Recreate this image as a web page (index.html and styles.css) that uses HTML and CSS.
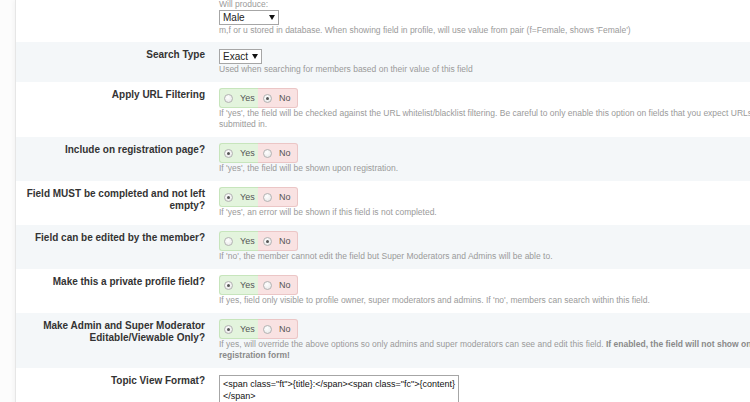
FILE: index.html
```html
<!DOCTYPE html>
<html lang="en">
<head>
    <meta charset="UTF-8">
    <title>Profile Field Options</title>
    <link rel="stylesheet" href="styles.css">
</head>
<body>
    <div class="page">
        <div class="panel">
            <div class="row first">
                <div class="label"></div>
                <div class="value">
                    <div class="hint">Will produce:</div>
                    <div class="select select-male">Male<span class="arrow"></span></div>
                    <div class="desc">m,f or u stored in database. When showing field in profile, will use value from pair (f=Female, shows 'Female')</div>
                </div>
            </div>

            <div class="row alt">
                <div class="label">Search Type</div>
                <div class="value">
                    <div class="select select-exact">Exact<span class="arrow"></span></div>
                    <div class="desc">Used when searching for members based on their value of this field</div>
                </div>
            </div>

            <div class="row">
                <div class="label">Apply URL Filtering</div>
                <div class="value">
                    <div class="toggle">
                        <span class="yes"><span class="radio"></span>Yes</span>
                        <span class="no"><span class="radio checked"></span>No</span>
                    </div>
                    <div class="desc">If 'yes', the field will be checked against the URL whitelist/blacklist filtering. Be careful to only enable this option on fields that you expect URLs submitted in.</div>
                </div>
            </div>

            <div class="row alt">
                <div class="label">Include on registration page?</div>
                <div class="value">
                    <div class="toggle">
                        <span class="yes"><span class="radio checked"></span>Yes</span>
                        <span class="no"><span class="radio"></span>No</span>
                    </div>
                    <div class="desc">If 'yes', the field will be shown upon registration.</div>
                </div>
            </div>

            <div class="row">
                <div class="label">Field MUST be completed and not left empty?</div>
                <div class="value">
                    <div class="toggle">
                        <span class="yes"><span class="radio checked"></span>Yes</span>
                        <span class="no"><span class="radio"></span>No</span>
                    </div>
                    <div class="desc">If 'yes', an error will be shown if this field is not completed.</div>
                </div>
            </div>

            <div class="row alt">
                <div class="label">Field can be edited by the member?</div>
                <div class="value">
                    <div class="toggle">
                        <span class="yes"><span class="radio"></span>Yes</span>
                        <span class="no"><span class="radio checked"></span>No</span>
                    </div>
                    <div class="desc">If 'no', the member cannot edit the field but Super Moderators and Admins will be able to.</div>
                </div>
            </div>

            <div class="row">
                <div class="label">Make this a private profile field?</div>
                <div class="value">
                    <div class="toggle">
                        <span class="yes"><span class="radio checked"></span>Yes</span>
                        <span class="no"><span class="radio"></span>No</span>
                    </div>
                    <div class="desc">If yes, field only visible to profile owner, super moderators and admins. If 'no', members can search within this field.</div>
                </div>
            </div>

            <div class="row alt">
                <div class="label">Make Admin and Super Moderator Editable/Viewable Only?</div>
                <div class="value">
                    <div class="toggle">
                        <span class="yes"><span class="radio checked"></span>Yes</span>
                        <span class="no"><span class="radio"></span>No</span>
                    </div>
                    <div class="desc">If yes, will override the above options so only admins and super moderators can see and edit this field. <b>If enabled, the field will not show on the registration form!</b></div>
                </div>
            </div>

            <div class="row">
                <div class="label">Topic View Format?</div>
                <div class="value">
                    <textarea class="format" readonly>&lt;span class="ft"&gt;{title}:&lt;/span&gt;&lt;span class="fc"&gt;{content}&lt;/span&gt;</textarea>
                </div>
            </div>
        </div>
    </div>
</body>
</html>
```

FILE: styles.css
```css
body {
    margin: 0;
    background-color: #fcfcfc;
    font-family: 'Liberation Sans', Arial, sans-serif;
    color: #333;
    overflow: hidden;
}

.page {
    padding-left: 15px;
}

.panel {
    width: 800px;
    background-color: #ffffff;
    border-left: 1px solid #e6e6e6;
    box-shadow: -2px 0 4px rgba(0, 0, 0, 0.03);
}

.row {
    display: flex;
}

.row.alt {
    background-color: #f4f7f9;
}

.label {
    width: 203px;
    flex-shrink: 0;
    box-sizing: border-box;
    padding: 7px 14px 0 6px;
    text-align: right;
    font-size: 10px;
    line-height: 12px;
    font-weight: bold;
    color: #333;
}

.value {
    width: 558px;
    padding: 6px 0 7px;
}

.row.first .value {
    padding-top: 0;
    padding-bottom: 6px;
}

.hint {
    font-size: 8.5px;
    line-height: 11px;
    margin-top: -1px;
    color: #9a9a9a;
}

.desc {
    font-size: 8.5px;
    line-height: 11px;
    color: #9a9a9a;
}

.desc b {
    color: #8a8a8a;
}

/* Selects */
.select {
    position: relative;
    box-sizing: border-box;
    height: 15px;
    padding: 0 3px;
    border: 1px solid #a6a6a6;
    background-color: #fff;
    font-size: 10px;
    line-height: 13px;
    color: #222;
}

.select-male {
    width: 60px;
}

.select-exact {
    width: 43px;
    margin-top: 1px;
}

.select .arrow {
    position: absolute;
    right: 3px;
    top: 4px;
    width: 0;
    height: 0;
    border-left: 3px solid transparent;
    border-right: 3px solid transparent;
    border-top: 5px solid #111;
}

/* Yes / No toggles */
.toggle {
    display: flex;
    height: 20px;
    font-size: 9px;
    color: #555;
}

.toggle .yes,
.toggle .no {
    display: flex;
    align-items: center;
    gap: 7px;
    box-sizing: border-box;
}

.toggle .yes {
    width: 39px;
    padding-left: 4px;
    background-color: #e3f4dd;
    border: 1px solid #c7e5bc;
    border-right: none;
    border-radius: 3px 0 0 3px;
}

.toggle .no {
    width: 40px;
    padding-left: 5px;
    background-color: #f9e2e2;
    border: 1px solid #ebc6c6;
    border-left: none;
    border-radius: 0 3px 3px 0;
}

.radio {
    position: relative;
    width: 9px;
    height: 9px;
    box-sizing: border-box;
    border: 1px solid #b3b3b3;
    border-radius: 50%;
    background: radial-gradient(circle at 40% 35%, #ffffff, #e4e4e4);
}

.radio.checked::after {
    content: '';
    position: absolute;
    left: 2px;
    top: 2px;
    width: 3px;
    height: 3px;
    border-radius: 50%;
    background-color: #555;
}

.format {
    display: block;
    width: 240px;
    height: 40px;
    margin: 1px 0 0;
    padding: 2px 3px;
    box-sizing: border-box;
    border: 1px solid #a6a6a6;
    border-radius: 0;
    font-family: 'Liberation Sans', Arial, sans-serif;
    font-size: 9px;
    line-height: 12px;
    color: #111;
    resize: none;
    overflow: hidden;
}
```
